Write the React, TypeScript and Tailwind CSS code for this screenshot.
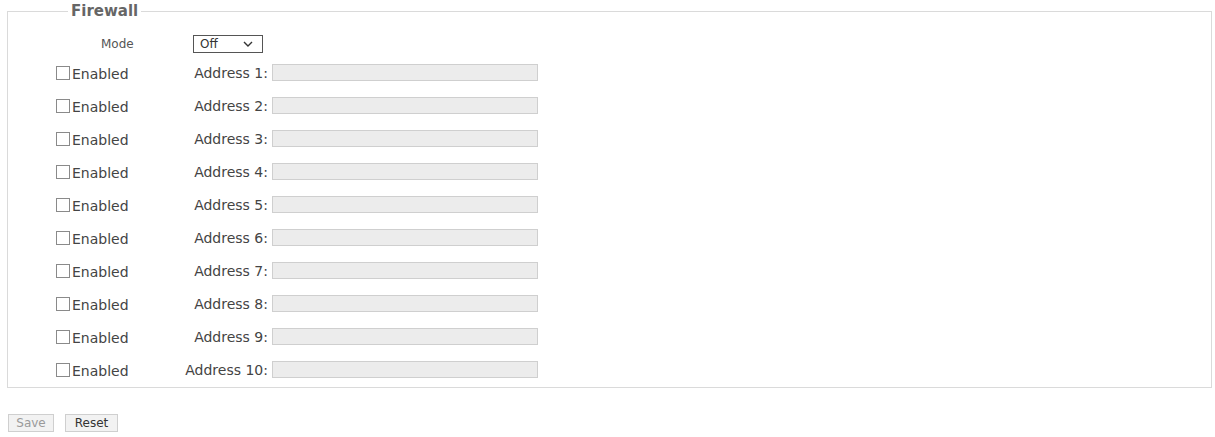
import { useState } from 'react';

const addresses = Array.from({ length: 10 }, (_, i) => i + 1);

function Chevron() {
  return (
    <svg width="10" height="6" viewBox="0 0 10 6" className="shrink-0">
      <polyline points="1,1 5,5 9,1" fill="none" stroke="#333" strokeWidth="1.4" />
    </svg>
  );
}

function AddressRow({ index }: { index: number }) {
  const [enabled, setEnabled] = useState(false);
  return (
    <div className="flex h-[33px] items-center">
      <label className="flex w-[132px] items-center pl-[48px]">
        <span
          onClick={() => setEnabled(!enabled)}
          className="h-[14px] w-[14px] shrink-0 border border-[#8a8a8a] bg-white"
        />
        <span className="ml-[2px] mt-[3px] text-[14px] leading-[16px] text-[#444]">Enabled</span>
      </label>
      <span className="w-[128px] text-right text-[14px] leading-[16px] text-[#444]">Address {index}:</span>
      <div className="ml-[4px] h-[17px] w-[266px] border border-[#cfcfcf] bg-[#ececec]" />
    </div>
  );
}

export default function App() {
  return (
    <div className="min-h-screen bg-white pt-[2px] font-['DejaVu_Sans',Verdana,sans-serif]">
      <fieldset className="ml-[7px] mr-[3px] border border-[#dadada] pb-[1px]">
        <legend className="ml-[60px] px-[3px] text-[15px] font-bold leading-[18px] text-[#666]">Firewall</legend>
        <div className="mt-[15px] flex h-[18px] items-center">
          <span className="w-[185px] pl-[93px] text-[12px] text-[#555]">Mode</span>
          <div className="flex h-[18px] w-[70px] items-center justify-between border border-[#555] bg-white pl-[6px] pr-[9px]">
            <span className="text-[12px] leading-[14px] text-[#333]">Off</span>
            <Chevron />
          </div>
        </div>
        <div className="mt-[3px]">
          {addresses.map((n) => (
            <AddressRow key={n} index={n} />
          ))}
        </div>
      </fieldset>
      <div className="ml-[8px] mt-[26px] flex gap-[11px]">
        <button className="flex h-[18px] w-[46px] items-center justify-center border border-[#cfcfcf] bg-[#f2f2f2] text-[12px] text-[#9a9a9a]">
          Save
        </button>
        <button className="flex h-[18px] w-[53px] items-center justify-center border border-[#cfcfcf] bg-[#f2f2f2] text-[12px] text-[#333]">
          Reset
        </button>
      </div>
    </div>
  );
}
